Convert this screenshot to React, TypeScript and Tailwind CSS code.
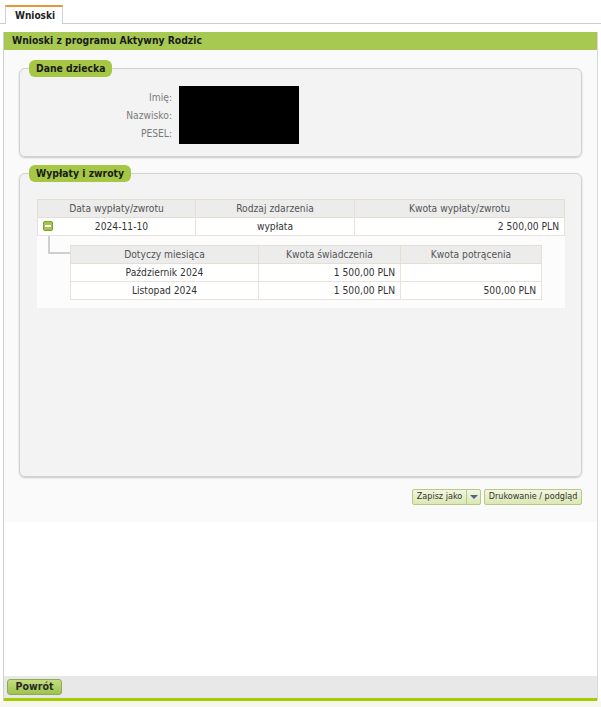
import React from "react";

function Legend({ children }: { children: React.ReactNode }) {
  return (
    <legend className="ml-[9px] h-[17px] px-[7px] rounded-[6px] bg-[#a6c744] font-bold text-[10.3px] leading-[17px] text-[#1a1a1a]">
      {children}
    </legend>
  );
}

function MinusIcon() {
  return (
    <div className="w-[10px] h-[10px] rounded-[2px] border border-[#7d9e2c] bg-[#a3c54b] flex items-center justify-center shrink-0">
      <div className="w-[6px] h-[2px] bg-white" />
    </div>
  );
}

export default function App() {
  const th = "h-[18px] bg-[#ececec] border border-[#e4ded3] font-normal text-[#555] text-center px-[4px]";
  const td = "h-[18px] bg-white border border-[#e8e2d8] text-[#333] px-[5px]";
  return (
    <div className="w-[601px] h-[707px] bg-white flex flex-col text-[10.2px] text-[#333] font-['DejaVu_Sans_Condensed','DejaVu_Sans',sans-serif]">
      {/* Tabs */}
      <div className="flex h-[24px] shrink-0">
        <div className="w-[5px] border-b border-[#cccccc]" />
        <div className="mt-[5px] w-[58px] h-[19px] border-t-2 border-t-[#e39a36] border-x border-x-[#d0d0d0] bg-white flex items-center justify-center pl-[2px] font-bold text-[10px] text-[#222]">
          Wnioski
        </div>
        <div className="flex-1 border-b border-[#cccccc]" />
      </div>

      {/* Main panel */}
      <div className="mt-[8px] mx-[3px] flex-1 flex flex-col border-l border-l-[#cfcfcf] border-r border-r-[#d4dbe2]">
        <div className="h-[18px] shrink-0 bg-[#a7c952] pl-[8px] flex items-center font-bold text-[10.3px] text-[#1a1a1a]">
          Wnioski z programu Aktywny Rodzic
        </div>

        <div className="bg-[#fafafa] px-[15px] pt-[10px] pb-[17px] flex flex-col">
          {/* Dane dziecka */}
          <fieldset className="border border-[#d2d2d2] rounded-[6px] bg-[#f3f3f3] shadow-[0_1px_2px_rgba(0,0,0,0.2)]">
            <Legend>Dane dziecka</Legend>
            <div className="flex pt-[9px] pb-[12px]">
              <div className="w-[152px] flex flex-col items-end pt-[3px] text-[#7a7a7a]">
                <div className="h-[18px] leading-[18px]">Imię:</div>
                <div className="h-[18px] leading-[18px]">Nazwisko:</div>
                <div className="h-[18px] leading-[18px]">PESEL:</div>
              </div>
              <div className="ml-[7px] w-[120px] h-[58px] bg-black" />
            </div>
          </fieldset>

          {/* Wypłaty i zwroty */}
          <fieldset className="mt-[8px] border border-[#d2d2d2] rounded-[6px] bg-[#f3f3f3] shadow-[0_1px_2px_rgba(0,0,0,0.2)]">
            <Legend>Wypłaty i zwroty</Legend>
            <div className="pt-[17px] pb-[168px] pl-[17px] pr-[16px]">
              <div className="bg-[#fcfcfc]">
                <table className="w-full table-fixed border-collapse">
                  <colgroup>
                    <col className="w-[158px]" />
                    <col className="w-[159px]" />
                    <col />
                  </colgroup>
                  <thead>
                    <tr>
                      <th className={th}>Data wypłaty/zwrotu</th>
                      <th className={th}>Rodzaj zdarzenia</th>
                      <th className={th}>Kwota wypłaty/zwrotu</th>
                    </tr>
                  </thead>
                  <tbody>
                    <tr>
                      <td className={td}>
                        <div className="flex items-center">
                          <MinusIcon />
                          <div className="flex-1 text-center">2024-11-10</div>
                        </div>
                      </td>
                      <td className={td + " text-center"}>wypłata</td>
                      <td className={td + " text-right"}>2 500,00 PLN</td>
                    </tr>
                  </tbody>
                </table>
                <div className="flex items-start pb-[8px]">
                  <div className="w-[33px] shrink-0">
                    <div className="ml-[11px] h-[18px] border-l-2 border-b-2 border-[#cfcfcf]" />
                  </div>
                  <div className="pt-[9px] w-[472px]">
                    <table className="w-full table-fixed border-collapse">
                      <colgroup>
                        <col className="w-[188px]" />
                        <col className="w-[142px]" />
                        <col />
                      </colgroup>
                      <thead>
                        <tr>
                          <th className={th}>Dotyczy miesiąca</th>
                          <th className={th}>Kwota świadczenia</th>
                          <th className={th}>Kwota potrącenia</th>
                        </tr>
                      </thead>
                      <tbody>
                        <tr>
                          <td className={td + " text-center"}>Październik 2024</td>
                          <td className={td + " text-right"}>1 500,00 PLN</td>
                          <td className={td + " text-right"}></td>
                        </tr>
                        <tr>
                          <td className={td + " text-center"}>Listopad 2024</td>
                          <td className={td + " text-right"}>1 500,00 PLN</td>
                          <td className={td + " text-right"}>500,00 PLN</td>
                        </tr>
                      </tbody>
                    </table>
                  </div>
                </div>
              </div>
            </div>
          </fieldset>

          {/* Buttons */}
          <div className="mt-[12px] flex justify-end gap-[3px]">
            <div className="flex h-[16px] border border-[#b8c987] rounded-[2px] bg-gradient-to-b from-[#f1f6de] to-[#dce7b3] text-[9px] text-[#333]">
              <div className="w-[53px] flex items-center justify-center">Zapisz jako</div>
              <div className="w-[14px] border-l border-[#b8c987] flex items-center justify-center">
                <div className="w-0 h-0 border-l-[4px] border-r-[4px] border-t-[4px] border-l-transparent border-r-transparent border-t-[#4a6491]" />
              </div>
            </div>
            <div className="w-[98px] h-[16px] flex items-center justify-center border border-[#b8c987] rounded-[2px] bg-gradient-to-b from-[#f1f6de] to-[#dce7b3] text-[9px] text-[#333]">
              Drukowanie / podgląd
            </div>
          </div>
        </div>

        <div className="flex-1 bg-white" />

        <div className="h-[22px] shrink-0 bg-[#e8e8e8] pl-[3px] pt-[3px]">
          <div className="w-[55px] h-[16px] rounded-[3px] border border-[#8fa85a] bg-gradient-to-b from-[#c4de7e] to-[#9ec34b] flex items-center justify-center font-bold text-[10.5px] text-[#2a2a2a]">
            Powrót
          </div>
        </div>
        <div className="h-[3px] shrink-0 bg-[#a2cd00]" />
      </div>
      <div className="h-[6px] shrink-0 bg-[#f7f7f0]" />
    </div>
  );
}
